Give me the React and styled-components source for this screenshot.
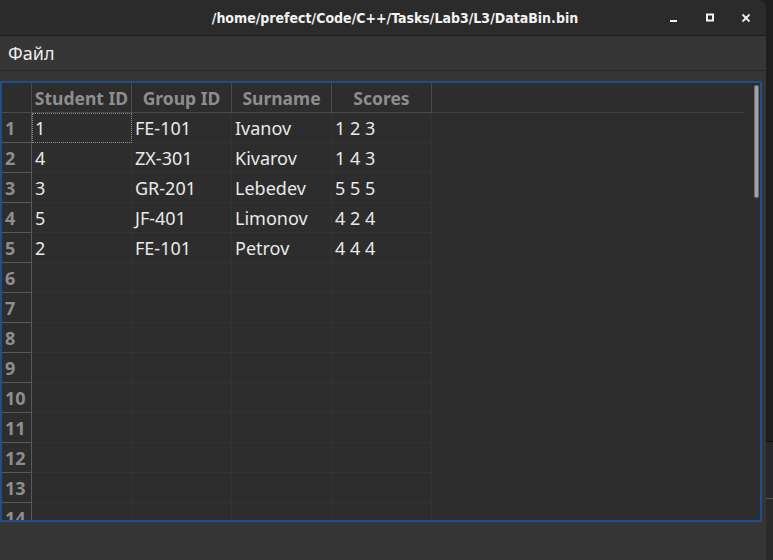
import React from "react";
import styled, { createGlobalStyle } from "styled-components";

const GlobalStyle = createGlobalStyle`
    html, body {
        margin: 0;
        padding: 0;
        background: #1f1f1f;
        overflow: hidden;
    }
    #root {
        height: 560px;
    }
`

const Screen = styled.div`
    display: flex;
    height: 560px;
    width: 773px;
    background: #1f1f1f;
`

const Window = styled.div`
    width: 766px;
    height: 560px;
    display: flex;
    flex-direction: column;
    background: #353535;
    border-top-right-radius: 9px;
    overflow: hidden;
    font-family: "Noto Sans", "Open Sans", sans-serif;
`

const Desktop = styled.div`
    flex: 1;
    display: flex;
    flex-direction: column;
    background: #1e1e1e;
`

const DesktopGap = styled.div`
    height: ${(p) => p.h}px;
    background: ${(p) => p.bg};
    border-top: ${(p) => (p.line ? `1px solid ${p.line}` : "none")};
`

const TitleBar = styled.div`
    height: 35px;
    flex-shrink: 0;
    display: flex;
    align-items: center;
    background: #2b2b2b;
    border-bottom: 1px solid #1d1d1d;
`

const Title = styled.div`
    flex: 1;
    padding-left: 134px;
    text-align: center;
    color: #f2f2f2;
    font-family: "DejaVu Sans", sans-serif;
    font-stretch: condensed;
    font-weight: 700;
    font-size: 14px;
    white-space: nowrap;
`

const Buttons = styled.div`
    display: flex;
    padding-right: 2px;
`

const WinButton = styled.div`
    width: 36px;
    height: 35px;
    display: flex;
    align-items: center;
    justify-content: center;
`

const MenuBar = styled.div`
    height: 34px;
    flex-shrink: 0;
    display: flex;
    align-items: center;
    padding-left: 8px;
    background: #363636;
    border-bottom: 1px solid #2a2a2a;
    color: #ececec;
    font-size: 18px;
`

const Body = styled.div`
    padding-top: 10px;
    height: 441px;
    flex-shrink: 0;
`

const Frame = styled.div`
    position: relative;
    width: 758px;
    height: 437px;
    border: 2px solid #1f4f88;
    background: #2d2d2d;
    overflow: hidden;
`

const Row = styled.div`
    display: flex;
    height: 30px;
`

const Corner = styled.div`
    width: 29px;
    height: 29px;
    flex-shrink: 0;
    border-right: 1px solid #4a4a4a;
    border-bottom: 1px solid #4a4a4a;
`

const HeadCell = styled.div`
    width: 99px;
    height: 29px;
    flex-shrink: 0;
    display: flex;
    align-items: center;
    justify-content: center;
    border-right: 1px solid #4a4a4a;
    border-bottom: 1px solid #4a4a4a;
    color: #8e8e8e;
    font-weight: 700;
    font-size: 17.5px;
    white-space: nowrap;
`

const HeadFill = styled.div`
    width: 313px;
    height: 29px;
    border-bottom: 1px solid #3f3f3f;
`

const RowNum = styled.div`
    width: 26px;
    height: 29px;
    flex-shrink: 0;
    padding-left: 3px;
    display: flex;
    align-items: center;
    border-right: 1px solid #5a5a5a;
    border-bottom: 1px solid #5a5a5a;
    color: #8e8e8e;
    font-weight: 700;
    font-size: 18px;
`

const Cell = styled.div`
    width: 96px;
    height: 29px;
    flex-shrink: 0;
    padding-left: 3px;
    display: flex;
    align-items: center;
    border-right: 1px solid #333333;
    border-bottom: 1px solid #333333;
    color: #e9e9e9;
    font-size: 18px;
    white-space: nowrap;
    outline: ${(p) => (p.focused ? "1px dotted #8a8a8a" : "none")};
    outline-offset: -1px;
`

const ScrollThumb = styled.div`
    position: absolute;
    top: 2px;
    right: 1px;
    width: 3px;
    height: 111px;
    background: #a3a3a3;
    border: 1px solid #6e6e6e;
    border-radius: 2px;
`

const StatusBar = styled.div`
    flex: 1;
    background: #353535;
`

const students = [
    ["1", "FE-101", "Ivanov", "1 2 3"],
    ["4", "ZX-301", "Kivarov", "1 4 3"],
    ["3", "GR-201", "Lebedev", "5 5 5"],
    ["5", "JF-401", "Limonov", "4 2 4"],
    ["2", "FE-101", "Petrov", "4 4 4"],
];

const headers = ["Student ID", "Group ID", "Surname", "Scores"];

const App = () => {
    const rows = [...Array(14)].map((x, i) => students[i] || ["", "", "", ""]);

    return (
        <Screen>
            <GlobalStyle />
            <Window>
                <TitleBar>
                    <Title>/home/prefect/Code/C++/Tasks/Lab3/L3/DataBin.bin</Title>
                    <Buttons>
                        <WinButton>
                            <svg width="10" height="10" viewBox="0 0 10 10">
                                <rect x="1" y="7" width="7" height="2" fill="#f2f2f2" />
                            </svg>
                        </WinButton>
                        <WinButton>
                            <svg width="10" height="10" viewBox="0 0 10 10">
                                <rect x="2" y="1.5" width="6" height="6" fill="none" stroke="#f2f2f2" strokeWidth="2" />
                            </svg>
                        </WinButton>
                        <WinButton>
                            <svg width="10" height="10" viewBox="0 0 10 10">
                                <path d="M1.5 1.5 L8.5 8.5 M8.5 1.5 L1.5 8.5" stroke="#f2f2f2" strokeWidth="1.8" />
                            </svg>
                        </WinButton>
                    </Buttons>
                </TitleBar>
                <MenuBar>Файл</MenuBar>
                <Body>
                    <Frame>
                        <Row>
                            <Corner />
                            {headers.map((h) => (
                                <HeadCell key={h}>{h}</HeadCell>
                            ))}
                            <HeadFill />
                        </Row>
                        {rows.map((r, i) => (
                            <Row key={i}>
                                <RowNum>{i + 1}</RowNum>
                                {r.map((v, j) => (
                                    <Cell key={j} focused={i === 0 && j === 0}>{v}</Cell>
                                ))}
                            </Row>
                        ))}
                        <ScrollThumb />
                    </Frame>
                </Body>
                <StatusBar />
            </Window>
            <Desktop>
                <DesktopGap h={443} bg="#1e1e1e" />
                <DesktopGap h={56} bg="#28282b" line="#0e0e0e" />
                <DesktopGap h={61} bg="#2a2a2a" line="#555555" />
            </Desktop>
        </Screen>
    );
}

export default App;
